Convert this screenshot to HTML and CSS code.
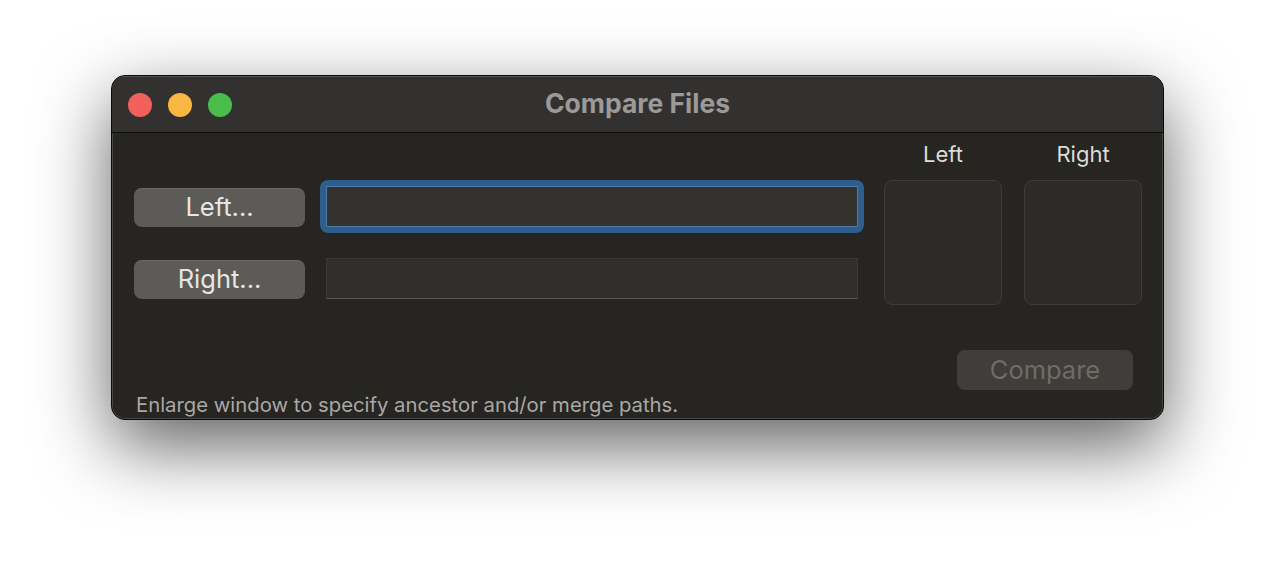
FILE: index.html
```html
<!DOCTYPE html>
<html lang="en">
<head>
<meta charset="utf-8">
<title>Compare Files</title>
<link rel="stylesheet" href="styles.css">
</head>
<body>
<div class="window">
  <div class="titlebar">
    <div class="lights">
      <span class="light red"></span>
      <span class="light yellow"></span>
      <span class="light green"></span>
    </div>
    <div class="title">Compare Files</div>
  </div>
  <div class="content">
    <div class="top">
      <div class="paths">
        <div class="path-row">
          <button class="btn">Left...</button>
          <div class="ring"><div class="field focused"></div></div>
        </div>
        <div class="path-row">
          <button class="btn">Right...</button>
          <div class="field"></div>
        </div>
      </div>
      <div class="wells">
        <div class="well-col">
          <div class="well-label">Left</div>
          <div class="well"></div>
        </div>
        <div class="well-col">
          <div class="well-label">Right</div>
          <div class="well"></div>
        </div>
      </div>
    </div>
    <div class="actions">
      <button class="btn compare" disabled>Compare</button>
    </div>
    <div class="hint">Enlarge window to specify ancestor and/or merge paths.</div>
  </div>
</div>
</body>
</html>
```
FILE: styles.css
```css
* { box-sizing: border-box; }

html, body {
  margin: 0;
  padding: 0;
  background: #ffffff;
  width: 1276px;
  height: 568px;
  overflow: hidden;
  font-family: Inter, "Noto Sans", "Liberation Sans", sans-serif;
}

.window {
  margin: 75px 0 0 111px;
  width: 1053px;
  height: 345px;
  border: 1px solid #0a0a0a;
  border-radius: 14px;
  background: #262521;
  overflow: hidden;
  box-shadow: inset 0 0 0 1px rgba(255,255,255,0.16), 0 26px 72px rgba(0,0,0,0.62);
  display: flex;
  flex-direction: column;
}

.titlebar {
  position: relative;
  height: 57px;
  flex: none;
  background: #323130;
  border-bottom: 1px solid #0e0e0d;
  box-shadow: inset 0 1px 0 rgba(255,255,255,0.16);
  display: flex;
  align-items: center;
}

.lights {
  display: flex;
  gap: 16px;
  padding-left: 16px;
  padding-top: 1px;
}

.light {
  width: 24px;
  height: 24px;
  border-radius: 50%;
  display: block;
}
.red { background: #f1605a; }
.yellow { background: #f9b640; }
.green { background: #48bd4a; }

.title {
  position: absolute;
  left: 0;
  right: 0;
  top: 0;
  bottom: 0;
  display: flex;
  align-items: center;
  justify-content: center;
  font-size: 26.5px;
  font-weight: 700;
  color: #9b9a99;
  letter-spacing: 0;
  padding-bottom: 2px;
}

.content {
  flex: 1;
  display: flex;
  flex-direction: column;
  padding: 8px 20px 0 22px;
}

.top {
  display: flex;
}

.paths {
  width: 724px;
  padding-top: 45px;
  display: flex;
  flex-direction: column;
  gap: 31px;
}

.path-row {
  display: flex;
  align-items: flex-end;
  gap: 21px;
}

.btn {
  font-family: inherit;
  width: 171px;
  height: 39px;
  border: none;
  border-radius: 8px;
  background: #5c5b57;
  box-shadow: inset 0 1px 0 rgba(255,255,255,0.10);
  color: #e6e6e4;
  font-size: 25.5px;
  padding: 0 0 2px;
  flex: none;
}

.ring {
  margin: -6px;
  padding: 6px;
  background: #2e5e8b;
  border-radius: 8px;
}

.field {
  width: 532px;
  height: 41px;
  background: #302f2c;
  border: 1px solid #3a3936;
  border-bottom-color: #56554f;
}

.field.focused {
  background: #33322f;
  border: 1px solid #4f7aa2;
}

.wells {
  display: flex;
  gap: 22px;
  margin-left: 26px;
}

.well-col {
  display: flex;
  flex-direction: column;
  align-items: center;
}

.well-label {
  font-size: 22px;
  line-height: 26px;
  color: #dddcdb;
  margin-bottom: 13px;
}

.well {
  width: 118px;
  height: 125px;
  border-radius: 8px;
  background: #2c2b28;
  border: 1px solid #3d3c39;
}

.actions {
  display: flex;
  justify-content: flex-end;
  margin-top: 45px;
  padding-right: 10px;
}

.btn.compare {
  width: 176px;
  height: 40px;
  background: #3f3e3b;
  box-shadow: none;
  color: #6d6c69;
}

.hint {
  margin-top: 3px;
  padding-left: 2px;
  font-size: 20.3px;
  line-height: 24px;
  color: #a9a8a6;
}
```
